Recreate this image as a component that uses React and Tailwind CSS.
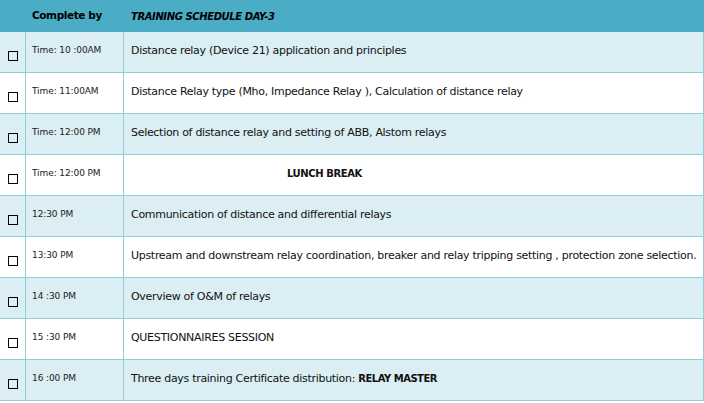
const rows = [
  { time: 'Time: 10 :00AM', text: 'Distance relay (Device 21) application and principles' },
  { time: 'Time: 11:00AM', text: 'Distance Relay type (Mho, Impedance Relay ), Calculation of distance relay' },
  { time: 'Time: 12:00 PM', text: 'Selection of distance relay and setting of ABB, Alstom relays' },
  { time: 'Time: 12:00 PM', lunch: true },
  { time: '12:30 PM', text: 'Communication of distance and differential relays' },
  { time: '13:30 PM', text: 'Upstream and downstream relay coordination, breaker and relay tripping setting , protection zone selection.' },
  { time: '14 :30 PM', text: 'Overview of O&M of relays' },
  { time: '15 :30 PM', text: 'QUESTIONNAIRES SESSION' },
  { time: '16 :00 PM', text: 'Three days training Certificate distribution: ', bold: 'RELAY MASTER' },
]

export default function App() {
  return (
    <div className="w-[704px] h-[403px] bg-white text-black" style={{ fontFamily: '"DejaVu Sans", Verdana, sans-serif' }}>
      <div className="grid grid-cols-[26px_98px_1fr] h-[32px] bg-[#4bacc6] items-center">
        <div />
        <div className="pl-[6px] text-[10.5px] font-bold tracking-[-0.4px]">Complete by</div>
        <div className="pl-[7px] text-[10px] font-bold italic tracking-[-0.4px]">TRAINING SCHEDULE DAY-3</div>
      </div>
      {rows.map((r, i) => (
        <div
          key={i}
          className={`grid grid-cols-[26px_98px_1fr] h-[41px] border-b border-[#92cddc] ${i % 2 === 0 ? 'bg-[#daeef3]' : 'bg-white'}`}
        >
          <div className="border-r border-[#92cddc] flex justify-center pt-[19px]">
            <div className="w-[10px] h-[10px] border border-black" />
          </div>
          <div className="border-r border-[#92cddc] pl-[6px] pt-[12px] text-[9px] text-[#222] tracking-[-0.1px]">{r.time}</div>
          <div className="border-r border-[#92cddc] pl-[7px] pt-[11px] text-[11px] text-[#111] tracking-[-0.3px] whitespace-nowrap">
            {r.lunch ? (
              <span className="pl-[156px] text-[10px] font-bold tracking-[-0.4px]">LUNCH BREAK</span>
            ) : (
              <>
                {r.text}
                {r.bold && <span className="font-bold text-[10px] tracking-[-0.5px]">{r.bold}</span>}
              </>
            )}
          </div>
        </div>
      ))}
    </div>
  )
}
